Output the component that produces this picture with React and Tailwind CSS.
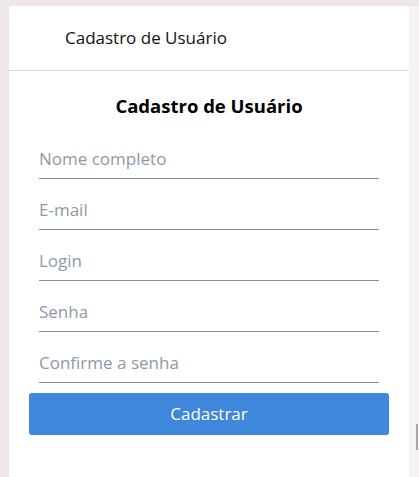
const fields = [
  { placeholder: 'Nome completo', type: 'text' },
  { placeholder: 'E-mail', type: 'email' },
  { placeholder: 'Login', type: 'text' },
  { placeholder: 'Senha', type: 'password' },
  { placeholder: 'Confirme a senha', type: 'password' }
];

export default function App() {
  return (
    <div
      className="flex h-[477px] w-[419px] overflow-hidden bg-[#efe7e5] pl-[9px]"
      style={{ fontFamily: '"Open Sans", "Noto Sans", sans-serif' }}
    >
      <div className="mt-[6px] flex w-[400px] flex-col bg-white">
        <header className="flex h-[65px] items-center border-b border-[#dedede] pl-[56px]">
          <span className="text-[17px] text-[#111]">Cadastro de Usuário</span>
        </header>
        <form className="flex flex-col">
          <h1 className="mt-[23px] text-center text-[18.5px] font-bold leading-[24px] text-black">
            Cadastro de Usuário
          </h1>
          <div className="mt-[10px] flex flex-col px-[30px]">
            {fields.map((f) => (
              <input
                key={f.placeholder}
                type={f.type}
                placeholder={f.placeholder}
                className="h-[51px] w-full border-b border-[#89929b] pt-[10px] text-[17px] text-[#333] outline-none placeholder:text-[#8d9aa8]"
              />
            ))}
          </div>
          <div className="mt-[10px] px-[20px]">
            <button
              type="button"
              className="h-[42px] w-full rounded-[3px] bg-[#3f87da] text-[17px] text-white"
            >
              Cadastrar
            </button>
          </div>
        </form>
      </div>
      <div className="mt-[6px] flex w-[10px] justify-end bg-[#f6f2f1] pr-[1px]">
        <div className="mt-[418px] h-[26px] w-[2px] bg-[#a8a8a8]" />
      </div>
    </div>
  );
}
